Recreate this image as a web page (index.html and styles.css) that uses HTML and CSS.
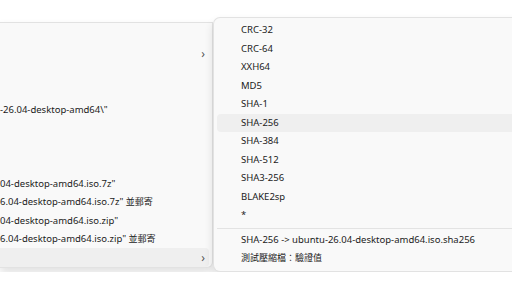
FILE: index.html
```html
<!DOCTYPE html>
<html lang="zh-Hant">
<head>
    <meta charset="UTF-8">
    <title>Context menu</title>
    <link rel="stylesheet" href="styles.css">
</head>
<body>
    <div class="stage">
        <div class="menu main-menu">
            <div class="item"><span class="label"></span></div>
            <div class="item"><span class="label"></span><span class="chevron">&#x203A;</span></div>
            <div class="item"><span class="label"></span></div>
            <div class="item"><span class="label"></span></div>
            <div class="item"><span class="label">-26.04-desktop-amd64\"</span></div>
            <div class="item"><span class="label"></span></div>
            <div class="item"><span class="label"></span></div>
            <div class="item"><span class="label"></span></div>
            <div class="item"><span class="label">04-desktop-amd64.iso.7z"</span></div>
            <div class="item"><span class="label">6.04-desktop-amd64.iso.7z" <span class="cjk">並郵寄</span></span></div>
            <div class="item"><span class="label">04-desktop-amd64.iso.zip"</span></div>
            <div class="item"><span class="label">6.04-desktop-amd64.iso.zip" <span class="cjk">並郵寄</span></span></div>
            <div class="item active"><span class="label"></span><span class="chevron">&#x203A;</span></div>
        </div>

        <div class="menu sub-menu">
            <div class="item">CRC-32</div>
            <div class="item">CRC-64</div>
            <div class="item">XXH64</div>
            <div class="item">MD5</div>
            <div class="item">SHA-1</div>
            <div class="item active">SHA-256</div>
            <div class="item">SHA-384</div>
            <div class="item">SHA-512</div>
            <div class="item">SHA3-256</div>
            <div class="item">BLAKE2sp</div>
            <div class="item">*</div>
            <div class="separator"></div>
            <div class="item">SHA-256 -&gt; ubuntu-26.04-desktop-amd64.iso.sha256</div>
            <div class="item"><span class="cjk">測試壓縮檔：驗證值</span></div>
        </div>
    </div>
</body>
</html>
```

FILE: styles.css
```css
html, body {
    margin: 0;
    overflow: hidden;
    background-color: #fff;
}
body {
    font-family: "Segoe UI", "Noto Sans", "Noto Sans CJK TC", sans-serif;
    font-size: 9.5px;
    color: #1b1b1b;
}
.cjk {
    font-family: "Noto Sans CJK TC", sans-serif;
    font-size: 9px;
}
.stage {
    display: flex;
    align-items: flex-start;
    width: 600px;
}
.menu {
    background-color: #f9f9f9;
    border: 1px solid #e2e2e2;
    box-shadow: 0 5px 10px rgba(0, 0, 0, 0.12);
}
.main-menu {
    margin-top: 22px;
    width: 212px;
    flex-shrink: 0;
    border-left: none;
    padding: 3px 0 0;
    border-radius: 0 0 6px 0;
}
.main-menu .item {
    display: flex;
    align-items: center;
    justify-content: space-between;
    height: 18.5px;
    margin-right: 3px;
    border-radius: 0 4px 4px 0;
    white-space: nowrap;
}
.main-menu .chevron {
    margin-right: 4px;
    font-size: 12px;
    color: #555;
}
.sub-menu {
    margin-top: 17px;
    width: 330px;
    flex-shrink: 0;
    padding: 3px 0;
    border-right: none;
    border-radius: 7px 0 0 7px;
}
.sub-menu .item {
    height: 18.5px;
    line-height: 18.5px;
    margin-left: 3px;
    padding-left: 24px;
    border-radius: 4px 0 0 4px;
    white-space: nowrap;
}
.item.active {
    background-color: #efefef;
}
.separator {
    height: 1px;
    margin: 3px 0 2.25px 3px;
    background-color: #e3e3e3;
}
```
